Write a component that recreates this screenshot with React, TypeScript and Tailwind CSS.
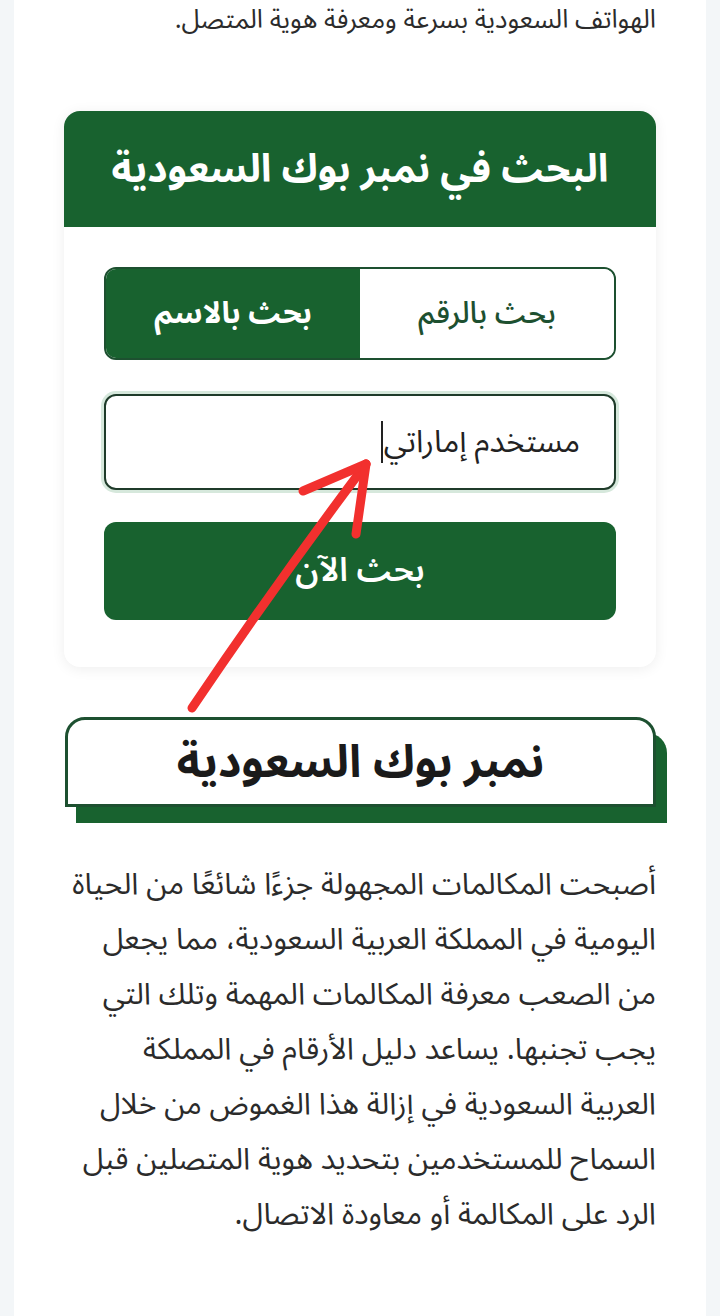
import React from 'react';

const AR = { fontFamily: '"Noto Sans Arabic", "DejaVu Sans", "Noto Sans", sans-serif' };

const lines = [
  'أصبحت المكالمات المجهولة جزءًا شائعًا من الحياة',
  'اليومية في المملكة العربية السعودية، مما يجعل',
  'من الصعب معرفة المكالمات المهمة وتلك التي',
  'يجب تجنبها. يساعد دليل الأرقام في المملكة',
  'العربية السعودية في إزالة هذا الغموض من خلال',
  'السماح للمستخدمين بتحديد هوية المتصلين قبل',
  'الرد على المكالمة أو معاودة الاتصال.',
];

function SearchCard() {
  return (
    <div className="mt-[65px] rounded-2xl overflow-hidden bg-white shadow-[0_2px_14px_rgba(0,0,0,0.07)]">
      <div className="h-[116px] bg-[#18622f] flex items-center justify-center">
        <h2 className="text-white text-[39px] font-bold leading-none">البحث في نمبر بوك السعودية</h2>
      </div>
      <div className="px-10 pt-10 pb-[47px] flex flex-col">
        {/* Tabs */}
        <div className="h-[93px] grid grid-cols-2 rounded-xl border-2 border-[#1d5030] overflow-hidden">
          <button className="bg-white text-[#1d5030] text-[30px] font-medium flex items-center justify-center">
            بحث بالرقم
          </button>
          <button className="bg-[#18622f] text-white text-[30px] font-bold flex items-center justify-center">
            بحث بالاسم
          </button>
        </div>

        {/* Input */}
        <div className="mt-[34px] h-[96px] rounded-xl border-2 border-[#1f3b2a] ring-[3px] ring-[#d6e8dc] bg-white flex items-center px-[34px]">
          <span className="text-[31px] text-[#222]">مستخدم إماراتي</span>
          <span className="w-[2px] h-[42px] bg-[#222] mr-[1px]" />
        </div>

        {/* Submit */}
        <button className="mt-[32px] h-[98px] rounded-xl bg-[#18622f] text-white text-[33px] font-semibold flex items-center justify-center">
          بحث الآن
        </button>
      </div>
    </div>
  );
}

function Arrow() {
  return (
    <svg
      className="absolute left-0 top-0 pointer-events-none"
      width="720"
      height="1316"
      viewBox="0 0 720 1316"
    >
      <g stroke="#f2302e" strokeWidth="9" strokeLinecap="round" strokeLinejoin="round" fill="none">
        <path d="M192 708 Q 275 585 366 464" />
        <path d="M366 464 L303 491" />
        <path d="M366 464 L356 534" />
      </g>
    </svg>
  );
}

export default function App() {
  return (
    <div dir="rtl" style={AR} className="relative min-h-[1316px] bg-[#f3f6f8] px-[14px] overflow-hidden">
      <div className="bg-white min-h-[1316px] px-[50px] pb-20">
        <p className="-mt-[6px] text-[26px] leading-[52px] text-[#2b2b2b]">
          الهواتف السعودية بسرعة ومعرفة هوية المتصل.
        </p>

        <SearchCard />

        {/* Section heading */}
        <div className="mt-[50px] ml-[1px] h-[90px] rounded-t-[20px] border-[3px] border-[#1d5030] bg-white shadow-[11px_16px_0_#18622f] flex items-center justify-center">
          <h2 className="text-[45px] font-bold text-[#1a1a1a] leading-none">نمبر بوك السعودية</h2>
        </div>

        <p className="mt-[50px] text-[30px] leading-[55px] text-[#2b2b2b]">
          {lines.map((l, i) => (
            <span key={i} className="block whitespace-nowrap">{l}</span>
          ))}
        </p>
      </div>
      <Arrow />
    </div>
  );
}
